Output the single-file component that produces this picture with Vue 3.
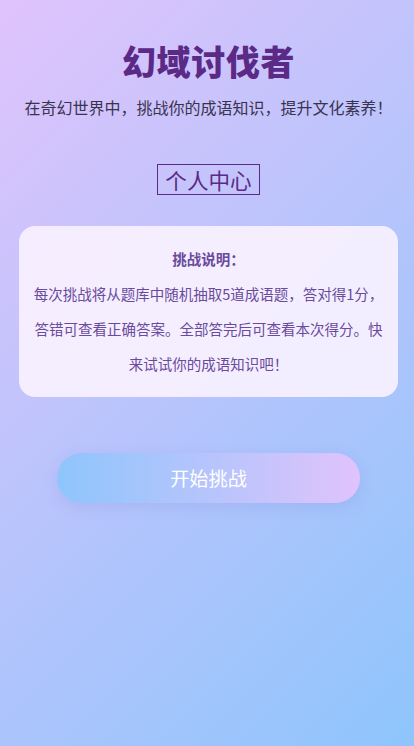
<script setup>
const title = '幻域讨伐者'
const subtitle = '在奇幻世界中，挑战你的成语知识，提升文化素养！'
const ruleLines = [
  '每次挑战将从题库中随机抽取5道成语题，答对得1分，',
  '答错可查看正确答案。全部答完后可查看本次得分。快',
  '来试试你的成语知识吧！'
]
</script>

<template>
  <div class="page">
    <h1 class="title">{{ title }}</h1>
    <p class="subtitle">{{ subtitle }}</p>
    <a class="profile">个人中心</a>
    <div class="rules">
      <p class="rules-head">挑战说明：</p>
      <p v-for="line in ruleLines" :key="line" class="rules-line">{{ line }}</p>
    </div>
    <button class="start">开始挑战</button>
  </div>
</template>

<style>
html, body {
  margin: 0;
  padding: 0;
}
</style>

<style scoped>
.page {
  box-sizing: border-box;
  height: 746px;
  padding: 39px 16px 0 19px;
  display: flex;
  flex-direction: column;
  align-items: center;
  background: linear-gradient(135deg, #e0c3fc 0%, #8ec5fc 100%);
  font-family: "Noto Sans CJK SC", "Noto Sans", sans-serif;
  overflow: hidden;
}
.title {
  margin: 0;
  font-size: 34px;
  line-height: 44px;
  letter-spacing: 0.6px;
  font-weight: 900;
  color: #5b2a86;
}
.subtitle {
  margin: 12px 0 0;
  font-size: 16px;
  line-height: 24px;
  color: #3a3350;
  white-space: nowrap;
}
.profile {
  margin-top: 45px;
  padding: 0 7px;
  border: 1px solid #5b2a86;
  font-size: 21.6px;
  line-height: 29px;
  color: #5b2a86;
}
.rules {
  box-sizing: border-box;
  width: 100%;
  height: 171px;
  margin-top: 31px;
  padding: 15px 8px 0;
  border-radius: 16px;
  background: rgba(248, 241, 255, 0.92);
  text-align: center;
  color: #6a4a9c;
  font-size: 14.5px;
  line-height: 35px;
}
.rules p {
  margin: 0;
  white-space: nowrap;
}
.rules-head {
  font-weight: 700;
}
.start {
  width: 303px;
  height: 50px;
  margin-top: 56px;
  border: none;
  border-radius: 25px;
  background: linear-gradient(90deg, #8ec5fc 0%, #e0c3fc 100%);
  box-shadow: 0 4px 15px rgba(100, 100, 200, 0.15);
  color: #fff;
  font-family: inherit;
  font-size: 19.2px;
}
</style>
